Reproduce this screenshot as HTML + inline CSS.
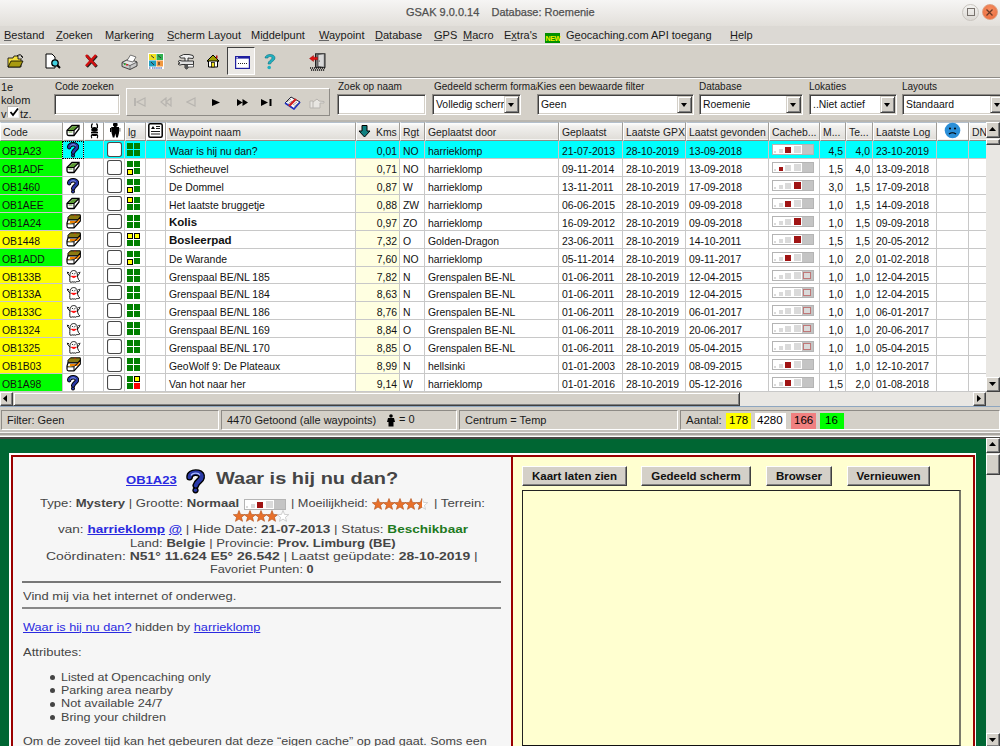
<!DOCTYPE html>
<html><head><meta charset="utf-8">
<style>
*{box-sizing:border-box}
html,body{margin:0;padding:0}
body{width:1000px;height:746px;overflow:hidden;position:relative;background:#d4d0c8;font-family:'Liberation Sans', sans-serif;color:#000}
.a{position:absolute}
.t{position:absolute;white-space:nowrap;line-height:1}
.menu span{position:absolute;top:29.5px;font-size:11px;color:#1a1a1a;white-space:nowrap;line-height:1}
.menu u{text-decoration:underline;text-decoration-color:#666}
.lbl{position:absolute;font-size:10px;color:#1a1a1a;white-space:nowrap;line-height:1;top:82px}
.inp{position:absolute;background:#fff;border-top:1px solid #8e8b86;border-left:1px solid #8e8b86;border-bottom:1px solid #fff;border-right:1px solid #fff;box-shadow:inset 1px 1px 0 #404040,inset -1px -1px 0 #d4d0c8}
.ddb{position:absolute;top:1px;right:1px;width:15px;bottom:1px;background:#d4d0c8;border-top:1px solid #d4d0c8;border-left:1px solid #d4d0c8;border-right:1px solid #404040;border-bottom:1px solid #404040;box-shadow:inset 1px 1px 0 #fff,inset -1px -1px 0 #808080}
.ddb:after{content:"";position:absolute;left:3px;top:6px;border-left:3.5px solid transparent;border-right:3.5px solid transparent;border-top:4px solid #000}
.ct{position:absolute;left:3px;top:5px;font-size:10.4px;color:#111;white-space:nowrap;line-height:1}
.hd{position:absolute;top:122px;height:19px;background:linear-gradient(#fff,#f1f0ee 20%,#dfdcd7);border-top:1px solid #b3bfcc;border-left:1px solid #fff;border-right:1px solid #a09d98;border-bottom:1px solid #8e8b86;box-shadow:inset 0 -1px 0 #f4f3f1;font-size:10.4px;color:#222;white-space:nowrap;overflow:hidden;line-height:1}
.hd span{position:absolute;top:5px}
.hw{background:#fff}
.c{position:absolute;height:18px;border-right:1px solid #c8c8c8;border-bottom:1px solid #c8c8c8;font-size:10.4px;color:#111;white-space:nowrap;overflow:hidden;line-height:1}
.c span{position:absolute;top:5.5px}
.r{text-align:right}
</style></head><body>

<div class="a" style="left:0;top:0;width:1000px;height:25.5px;background:linear-gradient(#f6f5f4,#e2dfda)"></div>
<div class="t" id="TTL" style="left:406px;top:6.5px;font-size:11px;color:#505050;-webkit-text-stroke:0.25px #505050;transform-origin:0 0;transform:scaleX(0.9984)">GSAK 9.0.0.14&nbsp;&nbsp;&nbsp; Database: Roemenie</div>
<div class="a" style="left:962px;top:4px;width:17px;height:17px;border-radius:50%;background:linear-gradient(#f4f3f1,#dcd9d4);border:1px solid #c9c5bf"></div>
<div class="a" style="left:967px;top:8px;width:8px;height:8px;border:1.5px solid #77716c"></div>
<div class="a" style="left:982px;top:4px;width:16px;height:16px;border-radius:50%;background:radial-gradient(circle at 50% 35%,#f58e62,#ea6a3a);border:1px solid #e0a080"></div>
<svg class="a" style="left:985px;top:8px" width="9" height="9" viewBox="0 0 9 9"><path d="M1.5 1.5 L7.5 7.5 M7.5 1.5 L1.5 7.5" stroke="#6b3a26" stroke-width="1.3"/></svg>
<div class="a" style="left:0;top:25.5px;width:1000px;height:18.5px;background:#dcd9d4"></div>
<div class="a" style="left:0;top:44px;width:1000px;height:1px;background:#fff"></div>
<div class="menu">
<span style="left:4px"><u>B</u>estand</span>
<span style="left:56px"><u>Z</u>oeken</span>
<span style="left:105px">M<u>a</u>rkering</span>
<span style="left:167px"><u>S</u>cherm Layout</span>
<span style="left:251px">Mi<u>d</u>delpunt</span>
<span style="left:319px"><u>W</u>aypoint</span>
<span style="left:375px"><u>D</u>atabase</span>
<span style="left:434px"><u>G</u>PS</span>
<span style="left:463px"><u>M</u>acro</span>
<span style="left:504px">E<u>x</u>tra's</span>
<span style="left:566px">G<u>e</u>ocaching.com API toegang</span>
<span style="left:730px"><u>H</u>elp</span>
</div>
<div class="a" style="left:545px;top:33px;width:15px;height:9.5px;background:#009000"></div>
<div class="t" style="left:545.5px;top:34.5px;font-size:7px;color:#f0f000;font-weight:bold;letter-spacing:-0.3px">NEW</div>
<div class="a" style="left:0;top:77px;width:1000px;height:1px;background:#8e8b86"></div>
<div class="a" style="left:0;top:78px;width:1000px;height:1px;background:#fff"></div>
<svg width="0" height="0" style="position:absolute">
<defs>
<symbol id="q" viewBox="0 0 12 16"><path d="M2.2 5.2 C2 1.5 10 1.2 10 5 C10 7.3 6.8 7.8 6.2 10.5" stroke="#000" stroke-width="4.4" fill="none" stroke-linecap="round"/><circle cx="6" cy="13.6" r="2" fill="#000"/><path d="M2.2 5.2 C2 1.5 10 1.2 10 5 C10 7.3 6.8 7.8 6.2 10.5" stroke="#2a3aa8" stroke-width="2.6" fill="none" stroke-linecap="round"/><path d="M3.2 4.2 C4 2.3 8 2.2 8.8 4" stroke="#a8b8ff" stroke-width="0.8" fill="none"/><circle cx="6" cy="13.6" r="1.1" fill="#2a3aa8"/></symbol>
<symbol id="trad" viewBox="0 0 14 13"><path d="M1 6.5 L6 1.5 L13 1.5 L13 5 L8 11.5 L3 11.5 Q1 11.5 1 9.5 Z" fill="#fff" stroke="#000" stroke-width="1.3"/><path d="M2 6.5 L6.5 2.3 L12.3 2.3 L8 6.5 Z" fill="#5a9a30"/><path d="M1 6.5 L8 6.5 L13 1.5 M8 6.5 L8 11.5" stroke="#000" stroke-width="1.1" fill="none"/><path d="M2.5 8 L6.5 8" stroke="#5a9a30" stroke-width="1"/></symbol>
<symbol id="multi" viewBox="0 0 15 15"><path d="M4.5 0.8 L14.3 0.8 L14.3 3.3 L12 5.8 L2 5.8 L2 3.3 Z" fill="#8a7a10" stroke="#000" stroke-width="1"/><path d="M8 1.3 L10 1.3" stroke="#b03010" stroke-width="1"/><path d="M2 5.8 L12 5.8 L14.3 3.3 L14.3 7 L8 13.8 L2.5 13.8 Q1 13.8 1 12 L1 9 Z" fill="#fff" stroke="#000" stroke-width="1.2"/><path d="M4 8 L11 8 L13.5 5.3" stroke="#f08000" stroke-width="1.8" fill="none"/><path d="M1 9.8 L8 9.8 L8 13.8 M8 9.8 L14.3 3.3" stroke="#000" stroke-width="1" fill="none"/><path d="M2.5 9.2 L5.5 9.2" stroke="#e0b000" stroke-width="0.9"/></symbol>
<symbol id="ghost" viewBox="0 0 15 15"><path d="M4 14 C3.5 12 4 9 4 6.5 C4 1.5 11 1.2 11.3 6 C11.5 8.5 11.5 11 13.8 13 C12 14.2 10.5 13 9.5 14.2 C8.5 13.4 7.3 14.6 6.2 13.8 C5.3 14.5 4.6 14.3 4 14 Z" fill="#fff" stroke="#000" stroke-width="0.9"/><path d="M4.2 8.5 L1.8 5.5 L1.3 3.8 M1.8 5.5 L2.8 4 M11.2 8.5 L13.5 5.5 L14 3.8 M13.5 5.5 L12.5 4" stroke="#000" stroke-width="0.9" fill="none"/><path d="M5.8 5 L7.2 6 M9.6 5 L8.2 6" stroke="#000" stroke-width="0.8"/><path d="M5.3 8.3 Q7.7 11 10.3 8.3 Z" fill="#f00" stroke="#f00" stroke-width="0.8"/></symbol>
<symbol id="chk" viewBox="0 0 14 14"><rect x="0.5" y="0.5" width="13" height="13" rx="2" fill="#fff" stroke="#4a4a4a" stroke-width="1"/></symbol>
</defs></svg>
<svg class="a" style="left:7px;top:53px" width="17" height="16" viewBox="0 0 17 16"><path d="M1 5 L6 5 L7 3 L11 3 L11 6 L14 6 L14 14 L1 14 Z" fill="#f4e040" stroke="#000" stroke-width="0.8"/><path d="M1 14 L4 8 L16 8 L13 14 Z" fill="#a89a10" stroke="#000" stroke-width="0.8"/><path d="M10 3 Q14 0 15 4" stroke="#000" fill="none" stroke-width="1"/><path d="M14 3 L16 4 L14.5 5.5" stroke="#000" fill="none" stroke-width="0.8"/></svg>
<svg class="a" style="left:45px;top:53px" width="16" height="17" viewBox="0 0 16 17"><path d="M1 1 L7 1 L10 4 L10 15 L1 15 Z" fill="#fff" stroke="#000" stroke-width="1"/><circle cx="10" cy="10" r="3.2" fill="#40d0e0" stroke="#000" stroke-width="1.3"/><path d="M12.3 12.3 L15 15" stroke="#000" stroke-width="2"/></svg>
<svg class="a" style="left:84px;top:53px" width="14" height="15" viewBox="0 0 14 15"><path d="M2 2 L12 13 M12 2 L2 13" stroke="#222" stroke-width="3" transform="translate(0.7,0.7)"/><path d="M2 2 L12 13 M12 2 L2 13" stroke="#d01010" stroke-width="2.6"/></svg>
<svg class="a" style="left:121px;top:54px" width="17" height="16" viewBox="0 0 17 16"><path d="M1 8.5 L8 5 L16 8 L16 12 L9 15.5 L1 12.5 Z" fill="#c8c8c8" stroke="#333" stroke-width="0.9"/><path d="M1 8.5 L8 5 L16 8 L9 11.5 Z" fill="#e8e8e8" stroke="#333" stroke-width="0.7"/><path d="M9 11.5 L9 15.5" stroke="#555" stroke-width="0.7"/><path d="M6 6.5 L9.5 1 L15 3 L12 8 Z" fill="#fff" stroke="#555" stroke-width="0.8"/><rect x="3" y="9.6" width="1.6" height="1.2" fill="#0b0"/><rect x="5.2" y="10.3" width="1.6" height="1.2" fill="#e00"/></svg>
<svg class="a" style="left:148px;top:53px" width="16" height="16" viewBox="0 0 16 16"><rect x="0" y="0" width="16" height="16" fill="#fff"/><rect x="1" y="1" width="7" height="6" fill="#f0e020"/><rect x="8.5" y="1" width="6.5" height="6" fill="#30b050"/><rect x="1" y="7.5" width="7" height="6" fill="#20a0c0"/><rect x="8.5" y="7.5" width="6.5" height="6" fill="#f09840"/><path d="M1 15 L3 15 M4 15 L14 15" stroke="#2040a0" stroke-width="1.2" stroke-dasharray="1.5 0.6"/><path d="M3 2.5 L6 5 M10 2.5 L13 5 M3 9 L6 12" stroke="#333" stroke-width="1"/><path d="M11 9 L11 12" stroke="#333" stroke-width="1.2"/></svg>
<svg class="a" style="left:177px;top:53px" width="18" height="18" viewBox="0 0 18 18"><path d="M2.5 3.5 Q6 0.5 12 1.5 L16 2.5 Q17 4 16 5.5 L11 5 L11 15 Q9.5 17 8 15 L8 5 L4 5 Q2.5 4.5 2.5 3.5 Z" fill="#f0f0f0" stroke="#222" stroke-width="0.9"/><path d="M1 8.5 Q2.5 6.5 5 8 L16.5 8 L16.5 11.5 L5 11.5 Q2.5 13 1 11 L3 10 Z" fill="#e0e0e0" stroke="#222" stroke-width="0.9"/><rect x="8" y="11.5" width="3" height="4.5" fill="#555"/><path d="M11 11.5 L16.5 11.5 L16.5 14 L11 14" fill="#fff" stroke="#222" stroke-width="0.7"/></svg>
<svg class="a" style="left:206px;top:54px" width="14" height="14" viewBox="0 0 14 14"><path d="M7 1 L13 7 L11.5 7 L11.5 13 L2.5 13 L2.5 7 L1 7 Z" fill="#fff" stroke="#000" stroke-width="1"/><path d="M7 1 L13 7 L1 7 Z" fill="#a0a000" stroke="#000" stroke-width="1"/><rect x="5.5" y="8.5" width="3" height="4.5" fill="#f0e020" stroke="#000" stroke-width="0.7"/><rect x="10" y="1.5" width="1.5" height="3" fill="#b01010"/></svg>
<div class="a" style="left:227px;top:47px;width:28px;height:28px;border-top:1px solid #404040;border-left:1px solid #404040;border-bottom:1px solid #fff;border-right:1px solid #fff;background:#ebe9e5"></div>
<svg class="a" style="left:235px;top:56px" width="15" height="13" viewBox="0 0 15 13"><rect x="0.6" y="0.6" width="13.8" height="11.8" fill="#fff" stroke="#2020a0" stroke-width="1.2"/><rect x="0.6" y="0.6" width="13.8" height="2" fill="#2020a0"/><rect x="1.5" y="1" width="1.2" height="1.2" fill="#fff"/><path d="M3 7.5 L12 7.5" stroke="#222" stroke-width="1" stroke-dasharray="1 1"/></svg>
<svg class="a" style="left:263px;top:53px" width="13" height="17" viewBox="0 0 13 17"><path d="M2 5 C2 0.5 12 0 12 5 C12 8 8 8.5 7.5 11 L5 11 C5 7.5 9 7 9 5 C9 3 5 3 5 5 Z" fill="#20b0c0" stroke="#107080" stroke-width="0.6"/><circle cx="6.2" cy="14.5" r="1.8" fill="#20b0c0"/></svg>
<svg class="a" style="left:309px;top:53px" width="17" height="18" viewBox="0 0 17 18"><rect x="6.5" y="0.8" width="9.5" height="13.5" fill="#777" stroke="#222" stroke-width="1"/><path d="M9 1.5 L15.3 0.8 L15.3 14.3 L9 13.5 Z" fill="#d8d8d8" stroke="#333" stroke-width="0.7"/><circle cx="10.3" cy="8" r="0.6" fill="#222"/><path d="M0.5 5.5 L4.5 2.5 L4.5 4.2 L8.5 4.2 L8.5 6.8 L4.5 6.8 L4.5 8.5 Z" fill="#e01010" stroke="#800" stroke-width="0.4"/><path d="M1 15 L16 15 M2 17 L16 17" stroke="#111" stroke-width="1.4" stroke-dasharray="1.2 0.8"/></svg>
<div class="a" style="left:0;top:120px;width:1000px;height:2px;background:#b9b6b0"></div>
<div class="t" style="left:1px;top:80.5px;font-size:11px;color:#1a1a1a;line-height:13.5px;white-space:normal;width:40px">1e<br>kolom<br>v</div>
<div class="t" style="left:20px;top:107.5px;font-size:11px;color:#1a1a1a;line-height:13.5px">tz.</div>
<div class="a" style="left:7px;top:106px;width:12px;height:12px;background:#fff;border-top:1px solid #b8b5b0;border-left:1px solid #b8b5b0;border-right:1px solid #eee;border-bottom:1px solid #eee"></div>
<svg class="a" style="left:9px;top:107px" width="10" height="10" viewBox="0 0 10 10"><path d="M1.5 5 L4 8 L9 1.5" stroke="#000" stroke-width="1.8" fill="none"/></svg>
<div class="lbl" style="left:55px">Code zoeken</div>
<div class="inp" style="left:54px;top:94px;width:66px;height:21px"></div>
<div class="a" style="left:126px;top:88px;width:204px;height:28px;border-top:1px solid #fff;border-left:1px solid #fff;border-right:1px solid #8e8b86;border-bottom:1px solid #8e8b86"></div>
<svg class="a" style="left:134px;top:97px" width="12" height="10" viewBox="0 0 12 10"><path d="M1 1 L1 9" stroke="#b8b5b0" stroke-width="2"/><path d="M11 1 L3 5 L11 9 Z" fill="none" stroke="#b8b5b0" stroke-width="1.2"/></svg>
<svg class="a" style="left:160px;top:97px" width="12" height="10" viewBox="0 0 12 10"><path d="M6 1 L1 5 L6 9 Z M11 1 L6 5 L11 9 Z" fill="none" stroke="#b8b5b0" stroke-width="1.2"/></svg>
<svg class="a" style="left:186px;top:97px" width="10" height="10" viewBox="0 0 10 10"><path d="M9 1 L1 5 L9 9 Z" fill="none" stroke="#b8b5b0" stroke-width="1.2"/></svg>
<svg class="a" style="left:212px;top:99px" width="8" height="7" viewBox="0 0 8 7"><path d="M0 0 L8 3.5 L0 7 Z" fill="#000"/></svg>
<svg class="a" style="left:237px;top:99px" width="11" height="7" viewBox="0 0 11 7"><path d="M0 0 L5.5 3.5 L0 7 Z M5.5 0 L11 3.5 L5.5 7 Z" fill="#000"/></svg>
<svg class="a" style="left:261px;top:99px" width="11" height="7" viewBox="0 0 11 7"><path d="M0 0 L7 3.5 L0 7 Z" fill="#000"/><rect x="8.5" y="0" width="2" height="7" fill="#000"/></svg>
<svg class="a" style="left:284px;top:96px" width="17" height="14" viewBox="0 0 17 14"><path d="M1 7 L7 1 L16 6 L10 13 Z" fill="#fff" stroke="#223" stroke-width="1"/><path d="M1 7 L10 13 L16 6" stroke="#2030c0" stroke-width="1.6" fill="none"/><path d="M5 10 L12 3" stroke="#d02020" stroke-width="2.4"/><path d="M3 6 L7 3 M4.5 7.5 L8 5 M9 9 L13 6 M10 10.5 L14 7.5" stroke="#555" stroke-width="0.6"/></svg>
<svg class="a" style="left:309px;top:98px" width="16" height="11" viewBox="0 0 16 11"><path d="M1 3 L4 3 L4 10 L1 10 Z M4 4 L8 1 L10 3 L15 3.5 L15 5 L11 5 L11 10 L4 10" fill="#e8e6e2" stroke="#b8b5b0" stroke-width="1"/></svg>
<div class="lbl" style="left:338px">Zoek op naam</div>
<div class="inp" style="left:337px;top:94px;width:89px;height:21px"></div>
<div class="lbl" style="left:434px;width:103px;overflow:hidden">Gedeeld scherm formaat</div>
<div class="lbl" style="left:537px">Kies een bewaarde filter</div>
<div class="lbl" style="left:699px">Database</div>
<div class="lbl" style="left:809px">Lokaties</div>
<div class="lbl" style="left:902px">Layouts</div>
<div class="inp" style="left:432px;top:94px;width:89px;height:21px"><div class="ct">Volledig scherm</div><div class="ddb"></div></div>
<div class="inp" style="left:537px;top:94px;width:157px;height:21px"><div class="ct">Geen</div><div class="ddb"></div></div>
<div class="inp" style="left:699px;top:94px;width:104px;height:21px"><div class="ct">Roemenie</div><div class="ddb"></div></div>
<div class="inp" style="left:809px;top:94px;width:88px;height:21px"><div class="ct">..Niet actief</div><div class="ddb"></div></div>
<div class="inp" style="left:902px;top:94px;width:105px;height:21px"><div class="ct">Standaard</div><div class="ddb"></div></div>
<div class="a" style="left:0;top:122px;width:986px;height:271px;background:#fff"></div>
<div class="hd" style="left:0px;width:63px"><span style="left:2px">Code</span></div>
<div class="hd hw" style="left:63px;width:21px"></div>
<div class="hd hw" style="left:84px;width:20px"></div>
<div class="hd hw" style="left:104px;width:21px"></div>
<div class="hd" style="left:125px;width:21px"><span style="left:2px">lg</span></div>
<div class="hd hw" style="left:146px;width:20px"></div>
<div class="hd" style="left:166px;width:190px"><span style="left:2px">Waypoint naam</span></div>
<div class="hd" style="left:356px;width:44px"><span style="left:19px">Kms</span></div>
<div class="hd" style="left:400px;width:25px"><span style="left:2px">Rgt</span></div>
<div class="hd" style="left:425px;width:134px"><span style="left:2px">Geplaatst door</span></div>
<div class="hd" style="left:559px;width:64px"><span style="left:2px">Geplaatst</span></div>
<div class="hd" style="left:623px;width:63px"><span style="left:2px">Laatste GPX</span></div>
<div class="hd" style="left:686px;width:83px"><span style="left:2px">Laatst gevonden</span></div>
<div class="hd" style="left:769px;width:51px"><span style="left:2px">Cacheb...</span></div>
<div class="hd" style="left:820px;width:26px"><span style="left:2px">M...</span></div>
<div class="hd" style="left:846px;width:27px"><span style="left:2px">Te...</span></div>
<div class="hd" style="left:873px;width:64px"><span style="left:2px">Laatste Log</span></div>
<div class="hd hw" style="left:937px;width:32px"></div>
<div class="hd" style="left:969px;width:18px"><span style="left:2px">DN</span></div>
<svg class="a" style="left:66px;top:124px" width="14" height="13" viewBox="0 0 14 13"><use href="#trad"/></svg>
<svg class="a" style="left:83px;top:121px" width="21" height="20" viewBox="0 0 21 20"><path d="M9.5 2.5 Q8 4 8.6 7 M13.5 2.5 Q15 4 14.4 7" stroke="#000" stroke-width="1.3" fill="none"/><ellipse cx="11.5" cy="8.3" rx="3" ry="2.4" fill="#000"/><rect x="8.5" y="8.3" width="6" height="2.2" fill="#000"/><rect x="8" y="11" width="7" height="1.4" fill="#000"/><path d="M8.7 13 L14.3 13 L13.6 15 L9.4 15 Z" fill="#000"/><path d="M8.8 13.5 Q7.6 15.3 8.8 17.2 M14.2 13.5 Q15.4 15.3 14.2 17.2" stroke="#000" stroke-width="1.2" fill="none"/></svg>
<svg class="a" style="left:104px;top:121px" width="20" height="20" viewBox="0 0 20 20"><rect x="9" y="2" width="4.6" height="3.2" rx="1" fill="#000"/><rect x="10" y="4.5" width="2.6" height="1.8" fill="#000"/><path d="M7.2 6 L15 6 L15 12 L13.8 16.5 L12.2 16.5 L11.3 12.5 L10.4 16.5 L8.8 16.5 L7.6 12 Z" fill="#000"/><rect x="6" y="7" width="1.4" height="4" fill="#000"/><rect x="15" y="7" width="1.6" height="3.6" fill="#999"/></svg>
<svg class="a" style="left:148px;top:123px" width="15" height="15" viewBox="0 0 15 15"><rect x="0.8" y="0.8" width="13.4" height="13.4" rx="1.5" fill="#fff" stroke="#000" stroke-width="1.5"/><path d="M3 6 L5 3 L7 6 Z" fill="#000"/><path d="M8 3.5 L12 3.5 M8 5.5 L12 5.5 M3 8.5 L12 8.5 M3 11 L12 11" stroke="#000" stroke-width="0.9"/></svg>
<svg class="a" style="left:944px;top:122px" width="17" height="17" viewBox="0 0 17 17"><circle cx="8.5" cy="8.5" r="7.8" fill="#2b8fd8"/><circle cx="6" cy="6.5" r="1" fill="#000"/><circle cx="11" cy="6.5" r="1" fill="#000"/><path d="M5 12 Q8.5 9.5 12 12" stroke="#000" stroke-width="1.2" fill="none"/></svg>
<svg class="a" style="left:358px;top:125px" width="13" height="13" viewBox="0 0 13 13"><path d="M4 0.5 L9 0.5 L9 6 L12 6 L6.5 12 L1 6 L4 6 Z" fill="#108080" stroke="#000" stroke-width="1"/></svg>
<div class="c" style="left:0px;top:141px;width:63px;height:18px;background:#00ff00"><span style="left:2px;">OB1A23</span></div>
<div class="c" style="left:63px;top:141px;width:21px;height:18px;background:#00ffff"></div>
<div class="c" style="left:84px;top:141px;width:20px;height:18px;background:#00ffff"></div>
<div class="c" style="left:104px;top:141px;width:21px;height:18px;background:#00ffff"></div>
<div class="c" style="left:125px;top:141px;width:21px;height:18px;background:#00ffff"></div>
<div class="c" style="left:146px;top:141px;width:20px;height:18px;background:#00ffff"></div>
<div class="c" style="left:166px;top:141px;width:190px;height:18px;background:#00ffff"><span style="left:3px;">Waar is hij nu dan?</span></div>
<div class="c" style="left:356px;top:141px;width:44px;height:18px;background:#00ffff"><span style="right:2px;">0,01</span></div>
<div class="c" style="left:400px;top:141px;width:25px;height:18px;background:#00ffff"><span style="left:3px;">NO</span></div>
<div class="c" style="left:425px;top:141px;width:134px;height:18px;background:#00ffff"><span style="left:3px;">harrieklomp</span></div>
<div class="c" style="left:559px;top:141px;width:64px;height:18px;background:#00ffff"><span style="left:3px;">21-07-2013</span></div>
<div class="c" style="left:623px;top:141px;width:63px;height:18px;background:#00ffff"><span style="left:3px;">28-10-2019</span></div>
<div class="c" style="left:686px;top:141px;width:83px;height:18px;background:#00ffff"><span style="left:3px;">13-09-2018</span></div>
<div class="c" style="left:769px;top:141px;width:51px;height:18px;background:#00ffff"></div>
<div class="c" style="left:820px;top:141px;width:26px;height:18px;background:#00ffff"><span style="right:2px;">4,5</span></div>
<div class="c" style="left:846px;top:141px;width:27px;height:18px;background:#00ffff"><span style="right:2px;">4,0</span></div>
<div class="c" style="left:873px;top:141px;width:64px;height:18px;background:#00ffff"><span style="left:3px;">23-10-2019</span></div>
<div class="c" style="left:937px;top:141px;width:32px;height:18px;background:#00ffff"></div>
<div class="c" style="left:969px;top:141px;width:18px;height:18px;background:#00ffff"></div>
<svg class="a" style="left:67px;top:142px" width="12" height="16" viewBox="0 0 12 16"><use href="#q"/></svg>
<svg class="a" style="left:107px;top:142px" width="15" height="15" viewBox="0 0 14 14"><use href="#chk"/></svg>
<svg class="a" style="left:127px;top:143px" width="14" height="14" viewBox="0 0 14 14"><rect x="0" y="0" width="6" height="6" fill="#008000"/><rect x="7" y="0" width="6" height="6" fill="#008000"/><rect x="0" y="7" width="6" height="6" fill="#008000"/><rect x="7" y="7" width="6" height="6" fill="#008000"/></svg>
<svg class="a" style="left:772px;top:144px" width="42" height="11" viewBox="0 0 42 11"><rect x="0.5" y="0.5" width="41" height="10" fill="#fff" stroke="#b4b4b4" stroke-width="1"/><rect x="30" y="1" width="11" height="9" fill="#c4c4c4"/><rect x="2" y="7" width="2" height="2" fill="#dadada"/><rect x="7" y="5" width="4" height="4" fill="#dadada"/><rect x="13" y="3" width="6" height="6" fill="#a01414"/><rect x="22" y="2" width="7" height="7" fill="#dadada"/></svg>
<div class="c" style="left:0px;top:159px;width:63px;height:18px;background:#00ff00"><span style="left:2px;">OB1ADF</span></div>
<div class="c" style="left:63px;top:159px;width:21px;height:18px;background:#fff"></div>
<div class="c" style="left:84px;top:159px;width:20px;height:18px;background:#fff"></div>
<div class="c" style="left:104px;top:159px;width:21px;height:18px;background:#fff"></div>
<div class="c" style="left:125px;top:159px;width:21px;height:18px;background:#fff"></div>
<div class="c" style="left:146px;top:159px;width:20px;height:18px;background:#fff"></div>
<div class="c" style="left:166px;top:159px;width:190px;height:18px;background:#fff"><span style="left:3px;">Schietheuvel</span></div>
<div class="c" style="left:356px;top:159px;width:44px;height:18px;background:#ffffe1"><span style="right:2px;">0,71</span></div>
<div class="c" style="left:400px;top:159px;width:25px;height:18px;background:#fff"><span style="left:3px;">NO</span></div>
<div class="c" style="left:425px;top:159px;width:134px;height:18px;background:#fff"><span style="left:3px;">harrieklomp</span></div>
<div class="c" style="left:559px;top:159px;width:64px;height:18px;background:#fff"><span style="left:3px;">09-11-2014</span></div>
<div class="c" style="left:623px;top:159px;width:63px;height:18px;background:#fff"><span style="left:3px;">28-10-2019</span></div>
<div class="c" style="left:686px;top:159px;width:83px;height:18px;background:#fff"><span style="left:3px;">13-09-2018</span></div>
<div class="c" style="left:769px;top:159px;width:51px;height:18px;background:#fff"></div>
<div class="c" style="left:820px;top:159px;width:26px;height:18px;background:#fff"><span style="right:2px;">1,5</span></div>
<div class="c" style="left:846px;top:159px;width:27px;height:18px;background:#fff"><span style="right:2px;">4,0</span></div>
<div class="c" style="left:873px;top:159px;width:64px;height:18px;background:#fff"><span style="left:3px;">13-09-2018</span></div>
<div class="c" style="left:937px;top:159px;width:32px;height:18px;background:#fff"></div>
<div class="c" style="left:969px;top:159px;width:18px;height:18px;background:#fff"></div>
<svg class="a" style="left:66px;top:161px" width="14" height="13" viewBox="0 0 14 13"><use href="#trad"/></svg>
<svg class="a" style="left:107px;top:160px" width="15" height="15" viewBox="0 0 14 14"><use href="#chk"/></svg>
<svg class="a" style="left:127px;top:161px" width="14" height="14" viewBox="0 0 14 14"><rect x="0" y="0" width="6" height="6" fill="#008000"/><rect x="7" y="0" width="6" height="6" fill="#008000"/><rect x="0.5" y="8.5" width="5" height="5" fill="#ffff00" stroke="#000" stroke-width="1"/><rect x="7" y="7" width="6" height="6" fill="#008000"/></svg>
<svg class="a" style="left:772px;top:162px" width="42" height="11" viewBox="0 0 42 11"><rect x="0.5" y="0.5" width="41" height="10" fill="#fff" stroke="#b4b4b4" stroke-width="1"/><rect x="30" y="1" width="11" height="9" fill="#c4c4c4"/><rect x="2" y="7" width="2" height="2" fill="#dadada"/><rect x="7" y="5" width="4" height="4" fill="#a01414"/><rect x="13" y="3" width="6" height="6" fill="#dadada"/><rect x="22" y="2" width="7" height="7" fill="#dadada"/></svg>
<div class="c" style="left:0px;top:177px;width:63px;height:18px;background:#00ff00"><span style="left:2px;">OB1460</span></div>
<div class="c" style="left:63px;top:177px;width:21px;height:18px;background:#fff"></div>
<div class="c" style="left:84px;top:177px;width:20px;height:18px;background:#fff"></div>
<div class="c" style="left:104px;top:177px;width:21px;height:18px;background:#fff"></div>
<div class="c" style="left:125px;top:177px;width:21px;height:18px;background:#fff"></div>
<div class="c" style="left:146px;top:177px;width:20px;height:18px;background:#fff"></div>
<div class="c" style="left:166px;top:177px;width:190px;height:18px;background:#fff"><span style="left:3px;">De Dommel</span></div>
<div class="c" style="left:356px;top:177px;width:44px;height:18px;background:#ffffe1"><span style="right:2px;">0,87</span></div>
<div class="c" style="left:400px;top:177px;width:25px;height:18px;background:#fff"><span style="left:3px;">W</span></div>
<div class="c" style="left:425px;top:177px;width:134px;height:18px;background:#fff"><span style="left:3px;">harrieklomp</span></div>
<div class="c" style="left:559px;top:177px;width:64px;height:18px;background:#fff"><span style="left:3px;">13-11-2011</span></div>
<div class="c" style="left:623px;top:177px;width:63px;height:18px;background:#fff"><span style="left:3px;">28-10-2019</span></div>
<div class="c" style="left:686px;top:177px;width:83px;height:18px;background:#fff"><span style="left:3px;">17-09-2018</span></div>
<div class="c" style="left:769px;top:177px;width:51px;height:18px;background:#fff"></div>
<div class="c" style="left:820px;top:177px;width:26px;height:18px;background:#fff"><span style="right:2px;">3,0</span></div>
<div class="c" style="left:846px;top:177px;width:27px;height:18px;background:#fff"><span style="right:2px;">1,5</span></div>
<div class="c" style="left:873px;top:177px;width:64px;height:18px;background:#fff"><span style="left:3px;">17-09-2018</span></div>
<div class="c" style="left:937px;top:177px;width:32px;height:18px;background:#fff"></div>
<div class="c" style="left:969px;top:177px;width:18px;height:18px;background:#fff"></div>
<svg class="a" style="left:67px;top:178px" width="12" height="16" viewBox="0 0 12 16"><use href="#q"/></svg>
<svg class="a" style="left:107px;top:178px" width="15" height="15" viewBox="0 0 14 14"><use href="#chk"/></svg>
<svg class="a" style="left:127px;top:179px" width="14" height="14" viewBox="0 0 14 14"><rect x="0" y="0" width="6" height="6" fill="#008000"/><rect x="7" y="0" width="6" height="6" fill="#008000"/><rect x="0.5" y="8.5" width="5" height="5" fill="#ffff00" stroke="#000" stroke-width="1"/><rect x="7" y="7" width="6" height="6" fill="#008000"/></svg>
<svg class="a" style="left:772px;top:180px" width="42" height="11" viewBox="0 0 42 11"><rect x="0.5" y="0.5" width="41" height="10" fill="#fff" stroke="#b4b4b4" stroke-width="1"/><rect x="30" y="1" width="11" height="9" fill="#c4c4c4"/><rect x="2" y="7" width="2" height="2" fill="#dadada"/><rect x="7" y="5" width="4" height="4" fill="#dadada"/><rect x="13" y="3" width="6" height="6" fill="#dadada"/><rect x="22" y="2" width="7" height="7" fill="#a01414"/></svg>
<div class="c" style="left:0px;top:195px;width:63px;height:18px;background:#00ff00"><span style="left:2px;">OB1AEE</span></div>
<div class="c" style="left:63px;top:195px;width:21px;height:18px;background:#fff"></div>
<div class="c" style="left:84px;top:195px;width:20px;height:18px;background:#fff"></div>
<div class="c" style="left:104px;top:195px;width:21px;height:18px;background:#fff"></div>
<div class="c" style="left:125px;top:195px;width:21px;height:18px;background:#fff"></div>
<div class="c" style="left:146px;top:195px;width:20px;height:18px;background:#fff"></div>
<div class="c" style="left:166px;top:195px;width:190px;height:18px;background:#fff"><span style="left:3px;">Het laatste bruggetje</span></div>
<div class="c" style="left:356px;top:195px;width:44px;height:18px;background:#ffffe1"><span style="right:2px;">0,88</span></div>
<div class="c" style="left:400px;top:195px;width:25px;height:18px;background:#fff"><span style="left:3px;">ZW</span></div>
<div class="c" style="left:425px;top:195px;width:134px;height:18px;background:#fff"><span style="left:3px;">harrieklomp</span></div>
<div class="c" style="left:559px;top:195px;width:64px;height:18px;background:#fff"><span style="left:3px;">06-06-2015</span></div>
<div class="c" style="left:623px;top:195px;width:63px;height:18px;background:#fff"><span style="left:3px;">28-10-2019</span></div>
<div class="c" style="left:686px;top:195px;width:83px;height:18px;background:#fff"><span style="left:3px;">09-09-2018</span></div>
<div class="c" style="left:769px;top:195px;width:51px;height:18px;background:#fff"></div>
<div class="c" style="left:820px;top:195px;width:26px;height:18px;background:#fff"><span style="right:2px;">1,0</span></div>
<div class="c" style="left:846px;top:195px;width:27px;height:18px;background:#fff"><span style="right:2px;">1,5</span></div>
<div class="c" style="left:873px;top:195px;width:64px;height:18px;background:#fff"><span style="left:3px;">14-09-2018</span></div>
<div class="c" style="left:937px;top:195px;width:32px;height:18px;background:#fff"></div>
<div class="c" style="left:969px;top:195px;width:18px;height:18px;background:#fff"></div>
<svg class="a" style="left:66px;top:197px" width="14" height="13" viewBox="0 0 14 13"><use href="#trad"/></svg>
<svg class="a" style="left:107px;top:196px" width="15" height="15" viewBox="0 0 14 14"><use href="#chk"/></svg>
<svg class="a" style="left:127px;top:197px" width="14" height="14" viewBox="0 0 14 14"><rect x="0.5" y="0.5" width="5" height="5" fill="#ffff00" stroke="#000" stroke-width="1"/><rect x="7" y="0" width="6" height="6" fill="#008000"/><rect x="0" y="7" width="6" height="6" fill="#008000"/><rect x="7" y="7" width="6" height="6" fill="#008000"/></svg>
<svg class="a" style="left:772px;top:198px" width="42" height="11" viewBox="0 0 42 11"><rect x="0.5" y="0.5" width="41" height="10" fill="#fff" stroke="#b4b4b4" stroke-width="1"/><rect x="30" y="1" width="11" height="9" fill="#c4c4c4"/><rect x="2" y="7" width="2" height="2" fill="#dadada"/><rect x="7" y="5" width="4" height="4" fill="#dadada"/><rect x="13" y="3" width="6" height="6" fill="#a01414"/><rect x="22" y="2" width="7" height="7" fill="#dadada"/></svg>
<div class="c" style="left:0px;top:213px;width:63px;height:18px;background:#00ff00"><span style="left:2px;">OB1A24</span></div>
<div class="c" style="left:63px;top:213px;width:21px;height:18px;background:#fff"></div>
<div class="c" style="left:84px;top:213px;width:20px;height:18px;background:#fff"></div>
<div class="c" style="left:104px;top:213px;width:21px;height:18px;background:#fff"></div>
<div class="c" style="left:125px;top:213px;width:21px;height:18px;background:#fff"></div>
<div class="c" style="left:146px;top:213px;width:20px;height:18px;background:#fff"></div>
<div class="c" style="left:166px;top:213px;width:190px;height:18px;background:#fff"><span style="left:3px;font-weight:bold;font-size:11.5px;top:4px;">Kolis</span></div>
<div class="c" style="left:356px;top:213px;width:44px;height:18px;background:#ffffe1"><span style="right:2px;">0,97</span></div>
<div class="c" style="left:400px;top:213px;width:25px;height:18px;background:#fff"><span style="left:3px;">ZO</span></div>
<div class="c" style="left:425px;top:213px;width:134px;height:18px;background:#fff"><span style="left:3px;">harrieklomp</span></div>
<div class="c" style="left:559px;top:213px;width:64px;height:18px;background:#fff"><span style="left:3px;">16-09-2012</span></div>
<div class="c" style="left:623px;top:213px;width:63px;height:18px;background:#fff"><span style="left:3px;">28-10-2019</span></div>
<div class="c" style="left:686px;top:213px;width:83px;height:18px;background:#fff"><span style="left:3px;">09-09-2018</span></div>
<div class="c" style="left:769px;top:213px;width:51px;height:18px;background:#fff"></div>
<div class="c" style="left:820px;top:213px;width:26px;height:18px;background:#fff"><span style="right:2px;">1,0</span></div>
<div class="c" style="left:846px;top:213px;width:27px;height:18px;background:#fff"><span style="right:2px;">1,5</span></div>
<div class="c" style="left:873px;top:213px;width:64px;height:18px;background:#fff"><span style="left:3px;">09-09-2018</span></div>
<div class="c" style="left:937px;top:213px;width:32px;height:18px;background:#fff"></div>
<div class="c" style="left:969px;top:213px;width:18px;height:18px;background:#fff"></div>
<svg class="a" style="left:66px;top:214px" width="15" height="15" viewBox="0 0 15 15"><use href="#multi"/></svg>
<svg class="a" style="left:107px;top:214px" width="15" height="15" viewBox="0 0 14 14"><use href="#chk"/></svg>
<svg class="a" style="left:127px;top:215px" width="14" height="14" viewBox="0 0 14 14"><rect x="0" y="0" width="6" height="6" fill="#008000"/><rect x="7" y="0" width="6" height="6" fill="#008000"/><rect x="0" y="7" width="6" height="6" fill="#008000"/><rect x="7" y="7" width="6" height="6" fill="#008000"/></svg>
<svg class="a" style="left:772px;top:216px" width="42" height="11" viewBox="0 0 42 11"><rect x="0.5" y="0.5" width="41" height="10" fill="#fff" stroke="#b4b4b4" stroke-width="1"/><rect x="30" y="1" width="11" height="9" fill="#c4c4c4"/><rect x="2" y="7" width="2" height="2" fill="#dadada"/><rect x="7" y="5" width="4" height="4" fill="#dadada"/><rect x="13" y="3" width="6" height="6" fill="#dadada"/><rect x="22" y="2" width="7" height="7" fill="#a01414"/></svg>
<div class="c" style="left:0px;top:231px;width:63px;height:18px;background:#ffff00"><span style="left:2px;">OB1448</span></div>
<div class="c" style="left:63px;top:231px;width:21px;height:18px;background:#fff"></div>
<div class="c" style="left:84px;top:231px;width:20px;height:18px;background:#fff"></div>
<div class="c" style="left:104px;top:231px;width:21px;height:18px;background:#fff"></div>
<div class="c" style="left:125px;top:231px;width:21px;height:18px;background:#fff"></div>
<div class="c" style="left:146px;top:231px;width:20px;height:18px;background:#fff"></div>
<div class="c" style="left:166px;top:231px;width:190px;height:18px;background:#fff"><span style="left:3px;font-weight:bold;font-size:11.5px;top:4px;">Bosleerpad</span></div>
<div class="c" style="left:356px;top:231px;width:44px;height:18px;background:#ffffe1"><span style="right:2px;">7,32</span></div>
<div class="c" style="left:400px;top:231px;width:25px;height:18px;background:#fff"><span style="left:3px;">O</span></div>
<div class="c" style="left:425px;top:231px;width:134px;height:18px;background:#fff"><span style="left:3px;">Golden-Dragon</span></div>
<div class="c" style="left:559px;top:231px;width:64px;height:18px;background:#fff"><span style="left:3px;">23-06-2011</span></div>
<div class="c" style="left:623px;top:231px;width:63px;height:18px;background:#fff"><span style="left:3px;">28-10-2019</span></div>
<div class="c" style="left:686px;top:231px;width:83px;height:18px;background:#fff"><span style="left:3px;">14-10-2011</span></div>
<div class="c" style="left:769px;top:231px;width:51px;height:18px;background:#fff"></div>
<div class="c" style="left:820px;top:231px;width:26px;height:18px;background:#fff"><span style="right:2px;">1,5</span></div>
<div class="c" style="left:846px;top:231px;width:27px;height:18px;background:#fff"><span style="right:2px;">1,5</span></div>
<div class="c" style="left:873px;top:231px;width:64px;height:18px;background:#fff"><span style="left:3px;">20-05-2012</span></div>
<div class="c" style="left:937px;top:231px;width:32px;height:18px;background:#fff"></div>
<div class="c" style="left:969px;top:231px;width:18px;height:18px;background:#fff"></div>
<svg class="a" style="left:66px;top:232px" width="15" height="15" viewBox="0 0 15 15"><use href="#multi"/></svg>
<svg class="a" style="left:107px;top:232px" width="15" height="15" viewBox="0 0 14 14"><use href="#chk"/></svg>
<svg class="a" style="left:127px;top:233px" width="14" height="14" viewBox="0 0 14 14"><rect x="0.5" y="0.5" width="5" height="5" fill="#ffff00" stroke="#000" stroke-width="1"/><rect x="7.5" y="0.5" width="5" height="5" fill="#ffff00" stroke="#000" stroke-width="1"/><rect x="0" y="7" width="6" height="6" fill="#008000"/><rect x="7" y="7" width="6" height="6" fill="#008000"/></svg>
<svg class="a" style="left:772px;top:234px" width="42" height="11" viewBox="0 0 42 11"><rect x="0.5" y="0.5" width="41" height="10" fill="#fff" stroke="#b4b4b4" stroke-width="1"/><rect x="30" y="1" width="11" height="9" fill="#c4c4c4"/><rect x="2" y="7" width="2" height="2" fill="#dadada"/><rect x="7" y="5" width="4" height="4" fill="#dadada"/><rect x="13" y="3" width="6" height="6" fill="#dadada"/><rect x="22" y="2" width="7" height="7" fill="#a01414"/></svg>
<div class="c" style="left:0px;top:249px;width:63px;height:18px;background:#00ff00"><span style="left:2px;">OB1ADD</span></div>
<div class="c" style="left:63px;top:249px;width:21px;height:18px;background:#fff"></div>
<div class="c" style="left:84px;top:249px;width:20px;height:18px;background:#fff"></div>
<div class="c" style="left:104px;top:249px;width:21px;height:18px;background:#fff"></div>
<div class="c" style="left:125px;top:249px;width:21px;height:18px;background:#fff"></div>
<div class="c" style="left:146px;top:249px;width:20px;height:18px;background:#fff"></div>
<div class="c" style="left:166px;top:249px;width:190px;height:18px;background:#fff"><span style="left:3px;">De Warande</span></div>
<div class="c" style="left:356px;top:249px;width:44px;height:18px;background:#ffffe1"><span style="right:2px;">7,60</span></div>
<div class="c" style="left:400px;top:249px;width:25px;height:18px;background:#fff"><span style="left:3px;">NO</span></div>
<div class="c" style="left:425px;top:249px;width:134px;height:18px;background:#fff"><span style="left:3px;">harrieklomp</span></div>
<div class="c" style="left:559px;top:249px;width:64px;height:18px;background:#fff"><span style="left:3px;">05-11-2014</span></div>
<div class="c" style="left:623px;top:249px;width:63px;height:18px;background:#fff"><span style="left:3px;">28-10-2019</span></div>
<div class="c" style="left:686px;top:249px;width:83px;height:18px;background:#fff"><span style="left:3px;">09-11-2017</span></div>
<div class="c" style="left:769px;top:249px;width:51px;height:18px;background:#fff"></div>
<div class="c" style="left:820px;top:249px;width:26px;height:18px;background:#fff"><span style="right:2px;">1,0</span></div>
<div class="c" style="left:846px;top:249px;width:27px;height:18px;background:#fff"><span style="right:2px;">2,0</span></div>
<div class="c" style="left:873px;top:249px;width:64px;height:18px;background:#fff"><span style="left:3px;">01-02-2018</span></div>
<div class="c" style="left:937px;top:249px;width:32px;height:18px;background:#fff"></div>
<div class="c" style="left:969px;top:249px;width:18px;height:18px;background:#fff"></div>
<svg class="a" style="left:66px;top:250px" width="15" height="15" viewBox="0 0 15 15"><use href="#multi"/></svg>
<svg class="a" style="left:107px;top:250px" width="15" height="15" viewBox="0 0 14 14"><use href="#chk"/></svg>
<svg class="a" style="left:127px;top:251px" width="14" height="14" viewBox="0 0 14 14"><rect x="0" y="0" width="6" height="6" fill="#008000"/><rect x="7" y="0" width="6" height="6" fill="#008000"/><rect x="0.5" y="8.5" width="5" height="5" fill="#ffff00" stroke="#000" stroke-width="1"/><rect x="7" y="7" width="6" height="6" fill="#008000"/></svg>
<svg class="a" style="left:772px;top:252px" width="42" height="11" viewBox="0 0 42 11"><rect x="0.5" y="0.5" width="41" height="10" fill="#fff" stroke="#b4b4b4" stroke-width="1"/><rect x="30" y="1" width="11" height="9" fill="#c4c4c4"/><rect x="2" y="7" width="2" height="2" fill="#dadada"/><rect x="7" y="5" width="4" height="4" fill="#dadada"/><rect x="13" y="3" width="6" height="6" fill="#a01414"/><rect x="22" y="2" width="7" height="7" fill="#dadada"/></svg>
<div class="c" style="left:0px;top:267px;width:63px;height:17px;background:#ffff00"><span style="left:2px;">OB133B</span></div>
<div class="c" style="left:63px;top:267px;width:21px;height:17px;background:#fff"></div>
<div class="c" style="left:84px;top:267px;width:20px;height:17px;background:#fff"></div>
<div class="c" style="left:104px;top:267px;width:21px;height:17px;background:#fff"></div>
<div class="c" style="left:125px;top:267px;width:21px;height:17px;background:#fff"></div>
<div class="c" style="left:146px;top:267px;width:20px;height:17px;background:#fff"></div>
<div class="c" style="left:166px;top:267px;width:190px;height:17px;background:#fff"><span style="left:3px;">Grenspaal BE/NL 185</span></div>
<div class="c" style="left:356px;top:267px;width:44px;height:17px;background:#ffffe1"><span style="right:2px;">7,82</span></div>
<div class="c" style="left:400px;top:267px;width:25px;height:17px;background:#fff"><span style="left:3px;">N</span></div>
<div class="c" style="left:425px;top:267px;width:134px;height:17px;background:#fff"><span style="left:3px;">Grenspalen BE-NL</span></div>
<div class="c" style="left:559px;top:267px;width:64px;height:17px;background:#fff"><span style="left:3px;">01-06-2011</span></div>
<div class="c" style="left:623px;top:267px;width:63px;height:17px;background:#fff"><span style="left:3px;">28-10-2019</span></div>
<div class="c" style="left:686px;top:267px;width:83px;height:17px;background:#fff"><span style="left:3px;">12-04-2015</span></div>
<div class="c" style="left:769px;top:267px;width:51px;height:17px;background:#fff"></div>
<div class="c" style="left:820px;top:267px;width:26px;height:17px;background:#fff"><span style="right:2px;">1,0</span></div>
<div class="c" style="left:846px;top:267px;width:27px;height:17px;background:#fff"><span style="right:2px;">1,0</span></div>
<div class="c" style="left:873px;top:267px;width:64px;height:17px;background:#fff"><span style="left:3px;">12-04-2015</span></div>
<div class="c" style="left:937px;top:267px;width:32px;height:17px;background:#fff"></div>
<div class="c" style="left:969px;top:267px;width:18px;height:17px;background:#fff"></div>
<svg class="a" style="left:66px;top:268px" width="15" height="15" viewBox="0 0 15 15"><use href="#ghost"/></svg>
<svg class="a" style="left:107px;top:268px" width="15" height="15" viewBox="0 0 14 14"><use href="#chk"/></svg>
<svg class="a" style="left:127px;top:269px" width="14" height="14" viewBox="0 0 14 14"><rect x="0" y="0" width="6" height="6" fill="#008000"/><rect x="7" y="0" width="6" height="6" fill="#008000"/><rect x="0" y="7" width="6" height="6" fill="#008000"/><rect x="7" y="7" width="6" height="6" fill="#008000"/></svg>
<svg class="a" style="left:772px;top:270px" width="42" height="11" viewBox="0 0 42 11"><rect x="0.5" y="0.5" width="41" height="10" fill="#fff" stroke="#b4b4b4" stroke-width="1"/><rect x="30" y="1" width="11" height="9" fill="#c4c4c4"/><rect x="2" y="7" width="2" height="2" fill="#dadada"/><rect x="7" y="5" width="4" height="4" fill="#dadada"/><rect x="13" y="3" width="6" height="6" fill="#dadada"/><rect x="22" y="2" width="7" height="7" fill="#dadada"/><rect x="31.5" y="2.5" width="7" height="6" fill="#dadada" stroke="#b02020" stroke-width="1" stroke-dasharray="1 1"/></svg>
<div class="c" style="left:0px;top:284px;width:63px;height:18px;background:#ffff00"><span style="left:2px;">OB133A</span></div>
<div class="c" style="left:63px;top:284px;width:21px;height:18px;background:#fff"></div>
<div class="c" style="left:84px;top:284px;width:20px;height:18px;background:#fff"></div>
<div class="c" style="left:104px;top:284px;width:21px;height:18px;background:#fff"></div>
<div class="c" style="left:125px;top:284px;width:21px;height:18px;background:#fff"></div>
<div class="c" style="left:146px;top:284px;width:20px;height:18px;background:#fff"></div>
<div class="c" style="left:166px;top:284px;width:190px;height:18px;background:#fff"><span style="left:3px;">Grenspaal BE/NL 184</span></div>
<div class="c" style="left:356px;top:284px;width:44px;height:18px;background:#ffffe1"><span style="right:2px;">8,63</span></div>
<div class="c" style="left:400px;top:284px;width:25px;height:18px;background:#fff"><span style="left:3px;">N</span></div>
<div class="c" style="left:425px;top:284px;width:134px;height:18px;background:#fff"><span style="left:3px;">Grenspalen BE-NL</span></div>
<div class="c" style="left:559px;top:284px;width:64px;height:18px;background:#fff"><span style="left:3px;">01-06-2011</span></div>
<div class="c" style="left:623px;top:284px;width:63px;height:18px;background:#fff"><span style="left:3px;">28-10-2019</span></div>
<div class="c" style="left:686px;top:284px;width:83px;height:18px;background:#fff"><span style="left:3px;">12-04-2015</span></div>
<div class="c" style="left:769px;top:284px;width:51px;height:18px;background:#fff"></div>
<div class="c" style="left:820px;top:284px;width:26px;height:18px;background:#fff"><span style="right:2px;">1,0</span></div>
<div class="c" style="left:846px;top:284px;width:27px;height:18px;background:#fff"><span style="right:2px;">1,0</span></div>
<div class="c" style="left:873px;top:284px;width:64px;height:18px;background:#fff"><span style="left:3px;">12-04-2015</span></div>
<div class="c" style="left:937px;top:284px;width:32px;height:18px;background:#fff"></div>
<div class="c" style="left:969px;top:284px;width:18px;height:18px;background:#fff"></div>
<svg class="a" style="left:66px;top:285px" width="15" height="15" viewBox="0 0 15 15"><use href="#ghost"/></svg>
<svg class="a" style="left:107px;top:285px" width="15" height="15" viewBox="0 0 14 14"><use href="#chk"/></svg>
<svg class="a" style="left:127px;top:286px" width="14" height="14" viewBox="0 0 14 14"><rect x="0" y="0" width="6" height="6" fill="#008000"/><rect x="7" y="0" width="6" height="6" fill="#008000"/><rect x="0" y="7" width="6" height="6" fill="#008000"/><rect x="7" y="7" width="6" height="6" fill="#008000"/></svg>
<svg class="a" style="left:772px;top:287px" width="42" height="11" viewBox="0 0 42 11"><rect x="0.5" y="0.5" width="41" height="10" fill="#fff" stroke="#b4b4b4" stroke-width="1"/><rect x="30" y="1" width="11" height="9" fill="#c4c4c4"/><rect x="2" y="7" width="2" height="2" fill="#dadada"/><rect x="7" y="5" width="4" height="4" fill="#dadada"/><rect x="13" y="3" width="6" height="6" fill="#dadada"/><rect x="22" y="2" width="7" height="7" fill="#dadada"/><rect x="31.5" y="2.5" width="7" height="6" fill="#dadada" stroke="#b02020" stroke-width="1" stroke-dasharray="1 1"/></svg>
<div class="c" style="left:0px;top:302px;width:63px;height:18px;background:#ffff00"><span style="left:2px;">OB133C</span></div>
<div class="c" style="left:63px;top:302px;width:21px;height:18px;background:#fff"></div>
<div class="c" style="left:84px;top:302px;width:20px;height:18px;background:#fff"></div>
<div class="c" style="left:104px;top:302px;width:21px;height:18px;background:#fff"></div>
<div class="c" style="left:125px;top:302px;width:21px;height:18px;background:#fff"></div>
<div class="c" style="left:146px;top:302px;width:20px;height:18px;background:#fff"></div>
<div class="c" style="left:166px;top:302px;width:190px;height:18px;background:#fff"><span style="left:3px;">Grenspaal BE/NL 186</span></div>
<div class="c" style="left:356px;top:302px;width:44px;height:18px;background:#ffffe1"><span style="right:2px;">8,76</span></div>
<div class="c" style="left:400px;top:302px;width:25px;height:18px;background:#fff"><span style="left:3px;">N</span></div>
<div class="c" style="left:425px;top:302px;width:134px;height:18px;background:#fff"><span style="left:3px;">Grenspalen BE-NL</span></div>
<div class="c" style="left:559px;top:302px;width:64px;height:18px;background:#fff"><span style="left:3px;">01-06-2011</span></div>
<div class="c" style="left:623px;top:302px;width:63px;height:18px;background:#fff"><span style="left:3px;">28-10-2019</span></div>
<div class="c" style="left:686px;top:302px;width:83px;height:18px;background:#fff"><span style="left:3px;">06-01-2017</span></div>
<div class="c" style="left:769px;top:302px;width:51px;height:18px;background:#fff"></div>
<div class="c" style="left:820px;top:302px;width:26px;height:18px;background:#fff"><span style="right:2px;">1,0</span></div>
<div class="c" style="left:846px;top:302px;width:27px;height:18px;background:#fff"><span style="right:2px;">1,0</span></div>
<div class="c" style="left:873px;top:302px;width:64px;height:18px;background:#fff"><span style="left:3px;">06-01-2017</span></div>
<div class="c" style="left:937px;top:302px;width:32px;height:18px;background:#fff"></div>
<div class="c" style="left:969px;top:302px;width:18px;height:18px;background:#fff"></div>
<svg class="a" style="left:66px;top:303px" width="15" height="15" viewBox="0 0 15 15"><use href="#ghost"/></svg>
<svg class="a" style="left:107px;top:303px" width="15" height="15" viewBox="0 0 14 14"><use href="#chk"/></svg>
<svg class="a" style="left:127px;top:304px" width="14" height="14" viewBox="0 0 14 14"><rect x="0" y="0" width="6" height="6" fill="#008000"/><rect x="7" y="0" width="6" height="6" fill="#008000"/><rect x="0" y="7" width="6" height="6" fill="#008000"/><rect x="7" y="7" width="6" height="6" fill="#008000"/></svg>
<svg class="a" style="left:772px;top:305px" width="42" height="11" viewBox="0 0 42 11"><rect x="0.5" y="0.5" width="41" height="10" fill="#fff" stroke="#b4b4b4" stroke-width="1"/><rect x="30" y="1" width="11" height="9" fill="#c4c4c4"/><rect x="2" y="7" width="2" height="2" fill="#dadada"/><rect x="7" y="5" width="4" height="4" fill="#dadada"/><rect x="13" y="3" width="6" height="6" fill="#dadada"/><rect x="22" y="2" width="7" height="7" fill="#dadada"/><rect x="31.5" y="2.5" width="7" height="6" fill="#dadada" stroke="#b02020" stroke-width="1" stroke-dasharray="1 1"/></svg>
<div class="c" style="left:0px;top:320px;width:63px;height:18px;background:#ffff00"><span style="left:2px;">OB1324</span></div>
<div class="c" style="left:63px;top:320px;width:21px;height:18px;background:#fff"></div>
<div class="c" style="left:84px;top:320px;width:20px;height:18px;background:#fff"></div>
<div class="c" style="left:104px;top:320px;width:21px;height:18px;background:#fff"></div>
<div class="c" style="left:125px;top:320px;width:21px;height:18px;background:#fff"></div>
<div class="c" style="left:146px;top:320px;width:20px;height:18px;background:#fff"></div>
<div class="c" style="left:166px;top:320px;width:190px;height:18px;background:#fff"><span style="left:3px;">Grenspaal BE/NL 169</span></div>
<div class="c" style="left:356px;top:320px;width:44px;height:18px;background:#ffffe1"><span style="right:2px;">8,84</span></div>
<div class="c" style="left:400px;top:320px;width:25px;height:18px;background:#fff"><span style="left:3px;">O</span></div>
<div class="c" style="left:425px;top:320px;width:134px;height:18px;background:#fff"><span style="left:3px;">Grenspalen BE-NL</span></div>
<div class="c" style="left:559px;top:320px;width:64px;height:18px;background:#fff"><span style="left:3px;">01-06-2011</span></div>
<div class="c" style="left:623px;top:320px;width:63px;height:18px;background:#fff"><span style="left:3px;">28-10-2019</span></div>
<div class="c" style="left:686px;top:320px;width:83px;height:18px;background:#fff"><span style="left:3px;">20-06-2017</span></div>
<div class="c" style="left:769px;top:320px;width:51px;height:18px;background:#fff"></div>
<div class="c" style="left:820px;top:320px;width:26px;height:18px;background:#fff"><span style="right:2px;">1,0</span></div>
<div class="c" style="left:846px;top:320px;width:27px;height:18px;background:#fff"><span style="right:2px;">1,0</span></div>
<div class="c" style="left:873px;top:320px;width:64px;height:18px;background:#fff"><span style="left:3px;">20-06-2017</span></div>
<div class="c" style="left:937px;top:320px;width:32px;height:18px;background:#fff"></div>
<div class="c" style="left:969px;top:320px;width:18px;height:18px;background:#fff"></div>
<svg class="a" style="left:66px;top:321px" width="15" height="15" viewBox="0 0 15 15"><use href="#ghost"/></svg>
<svg class="a" style="left:107px;top:321px" width="15" height="15" viewBox="0 0 14 14"><use href="#chk"/></svg>
<svg class="a" style="left:127px;top:322px" width="14" height="14" viewBox="0 0 14 14"><rect x="0" y="0" width="6" height="6" fill="#008000"/><rect x="7" y="0" width="6" height="6" fill="#008000"/><rect x="0" y="7" width="6" height="6" fill="#008000"/><rect x="7" y="7" width="6" height="6" fill="#008000"/></svg>
<svg class="a" style="left:772px;top:323px" width="42" height="11" viewBox="0 0 42 11"><rect x="0.5" y="0.5" width="41" height="10" fill="#fff" stroke="#b4b4b4" stroke-width="1"/><rect x="30" y="1" width="11" height="9" fill="#c4c4c4"/><rect x="2" y="7" width="2" height="2" fill="#dadada"/><rect x="7" y="5" width="4" height="4" fill="#dadada"/><rect x="13" y="3" width="6" height="6" fill="#dadada"/><rect x="22" y="2" width="7" height="7" fill="#dadada"/><rect x="31.5" y="2.5" width="7" height="6" fill="#dadada" stroke="#b02020" stroke-width="1" stroke-dasharray="1 1"/></svg>
<div class="c" style="left:0px;top:338px;width:63px;height:18px;background:#ffff00"><span style="left:2px;">OB1325</span></div>
<div class="c" style="left:63px;top:338px;width:21px;height:18px;background:#fff"></div>
<div class="c" style="left:84px;top:338px;width:20px;height:18px;background:#fff"></div>
<div class="c" style="left:104px;top:338px;width:21px;height:18px;background:#fff"></div>
<div class="c" style="left:125px;top:338px;width:21px;height:18px;background:#fff"></div>
<div class="c" style="left:146px;top:338px;width:20px;height:18px;background:#fff"></div>
<div class="c" style="left:166px;top:338px;width:190px;height:18px;background:#fff"><span style="left:3px;">Grenspaal BE/NL 170</span></div>
<div class="c" style="left:356px;top:338px;width:44px;height:18px;background:#ffffe1"><span style="right:2px;">8,85</span></div>
<div class="c" style="left:400px;top:338px;width:25px;height:18px;background:#fff"><span style="left:3px;">O</span></div>
<div class="c" style="left:425px;top:338px;width:134px;height:18px;background:#fff"><span style="left:3px;">Grenspalen BE-NL</span></div>
<div class="c" style="left:559px;top:338px;width:64px;height:18px;background:#fff"><span style="left:3px;">01-06-2011</span></div>
<div class="c" style="left:623px;top:338px;width:63px;height:18px;background:#fff"><span style="left:3px;">28-10-2019</span></div>
<div class="c" style="left:686px;top:338px;width:83px;height:18px;background:#fff"><span style="left:3px;">05-04-2015</span></div>
<div class="c" style="left:769px;top:338px;width:51px;height:18px;background:#fff"></div>
<div class="c" style="left:820px;top:338px;width:26px;height:18px;background:#fff"><span style="right:2px;">1,0</span></div>
<div class="c" style="left:846px;top:338px;width:27px;height:18px;background:#fff"><span style="right:2px;">1,0</span></div>
<div class="c" style="left:873px;top:338px;width:64px;height:18px;background:#fff"><span style="left:3px;">05-04-2015</span></div>
<div class="c" style="left:937px;top:338px;width:32px;height:18px;background:#fff"></div>
<div class="c" style="left:969px;top:338px;width:18px;height:18px;background:#fff"></div>
<svg class="a" style="left:66px;top:339px" width="15" height="15" viewBox="0 0 15 15"><use href="#ghost"/></svg>
<svg class="a" style="left:107px;top:339px" width="15" height="15" viewBox="0 0 14 14"><use href="#chk"/></svg>
<svg class="a" style="left:127px;top:340px" width="14" height="14" viewBox="0 0 14 14"><rect x="0" y="0" width="6" height="6" fill="#008000"/><rect x="7" y="0" width="6" height="6" fill="#008000"/><rect x="0" y="7" width="6" height="6" fill="#008000"/><rect x="7" y="7" width="6" height="6" fill="#008000"/></svg>
<svg class="a" style="left:772px;top:341px" width="42" height="11" viewBox="0 0 42 11"><rect x="0.5" y="0.5" width="41" height="10" fill="#fff" stroke="#b4b4b4" stroke-width="1"/><rect x="30" y="1" width="11" height="9" fill="#c4c4c4"/><rect x="2" y="7" width="2" height="2" fill="#dadada"/><rect x="7" y="5" width="4" height="4" fill="#dadada"/><rect x="13" y="3" width="6" height="6" fill="#dadada"/><rect x="22" y="2" width="7" height="7" fill="#dadada"/><rect x="31.5" y="2.5" width="7" height="6" fill="#dadada" stroke="#b02020" stroke-width="1" stroke-dasharray="1 1"/></svg>
<div class="c" style="left:0px;top:356px;width:63px;height:18px;background:#ffff00"><span style="left:2px;">OB1B03</span></div>
<div class="c" style="left:63px;top:356px;width:21px;height:18px;background:#fff"></div>
<div class="c" style="left:84px;top:356px;width:20px;height:18px;background:#fff"></div>
<div class="c" style="left:104px;top:356px;width:21px;height:18px;background:#fff"></div>
<div class="c" style="left:125px;top:356px;width:21px;height:18px;background:#fff"></div>
<div class="c" style="left:146px;top:356px;width:20px;height:18px;background:#fff"></div>
<div class="c" style="left:166px;top:356px;width:190px;height:18px;background:#fff"><span style="left:3px;">GeoWolf 9: De Plateaux</span></div>
<div class="c" style="left:356px;top:356px;width:44px;height:18px;background:#ffffe1"><span style="right:2px;">8,99</span></div>
<div class="c" style="left:400px;top:356px;width:25px;height:18px;background:#fff"><span style="left:3px;">N</span></div>
<div class="c" style="left:425px;top:356px;width:134px;height:18px;background:#fff"><span style="left:3px;">hellsinki</span></div>
<div class="c" style="left:559px;top:356px;width:64px;height:18px;background:#fff"><span style="left:3px;">01-01-2003</span></div>
<div class="c" style="left:623px;top:356px;width:63px;height:18px;background:#fff"><span style="left:3px;">28-10-2019</span></div>
<div class="c" style="left:686px;top:356px;width:83px;height:18px;background:#fff"><span style="left:3px;">08-09-2015</span></div>
<div class="c" style="left:769px;top:356px;width:51px;height:18px;background:#fff"></div>
<div class="c" style="left:820px;top:356px;width:26px;height:18px;background:#fff"><span style="right:2px;">1,0</span></div>
<div class="c" style="left:846px;top:356px;width:27px;height:18px;background:#fff"><span style="right:2px;">1,0</span></div>
<div class="c" style="left:873px;top:356px;width:64px;height:18px;background:#fff"><span style="left:3px;">12-10-2017</span></div>
<div class="c" style="left:937px;top:356px;width:32px;height:18px;background:#fff"></div>
<div class="c" style="left:969px;top:356px;width:18px;height:18px;background:#fff"></div>
<svg class="a" style="left:66px;top:357px" width="15" height="15" viewBox="0 0 15 15"><use href="#multi"/></svg>
<svg class="a" style="left:107px;top:357px" width="15" height="15" viewBox="0 0 14 14"><use href="#chk"/></svg>
<svg class="a" style="left:127px;top:358px" width="14" height="14" viewBox="0 0 14 14"><rect x="0" y="0" width="6" height="6" fill="#008000"/><rect x="7" y="0" width="6" height="6" fill="#008000"/><rect x="0" y="7" width="6" height="6" fill="#008000"/><rect x="7" y="7" width="6" height="6" fill="#008000"/></svg>
<svg class="a" style="left:772px;top:359px" width="42" height="11" viewBox="0 0 42 11"><rect x="0.5" y="0.5" width="41" height="10" fill="#fff" stroke="#b4b4b4" stroke-width="1"/><rect x="30" y="1" width="11" height="9" fill="#c4c4c4"/><rect x="2" y="7" width="2" height="2" fill="#dadada"/><rect x="7" y="5" width="4" height="4" fill="#dadada"/><rect x="13" y="3" width="6" height="6" fill="#a01414"/><rect x="22" y="2" width="7" height="7" fill="#dadada"/></svg>
<div class="c" style="left:0px;top:374px;width:63px;height:18px;background:#00ff00"><span style="left:2px;">OB1A98</span></div>
<div class="c" style="left:63px;top:374px;width:21px;height:18px;background:#fff"></div>
<div class="c" style="left:84px;top:374px;width:20px;height:18px;background:#fff"></div>
<div class="c" style="left:104px;top:374px;width:21px;height:18px;background:#fff"></div>
<div class="c" style="left:125px;top:374px;width:21px;height:18px;background:#fff"></div>
<div class="c" style="left:146px;top:374px;width:20px;height:18px;background:#fff"></div>
<div class="c" style="left:166px;top:374px;width:190px;height:18px;background:#fff"><span style="left:3px;">Van hot naar her</span></div>
<div class="c" style="left:356px;top:374px;width:44px;height:18px;background:#ffffe1"><span style="right:2px;">9,14</span></div>
<div class="c" style="left:400px;top:374px;width:25px;height:18px;background:#fff"><span style="left:3px;">W</span></div>
<div class="c" style="left:425px;top:374px;width:134px;height:18px;background:#fff"><span style="left:3px;">harrieklomp</span></div>
<div class="c" style="left:559px;top:374px;width:64px;height:18px;background:#fff"><span style="left:3px;">01-01-2016</span></div>
<div class="c" style="left:623px;top:374px;width:63px;height:18px;background:#fff"><span style="left:3px;">28-10-2019</span></div>
<div class="c" style="left:686px;top:374px;width:83px;height:18px;background:#fff"><span style="left:3px;">05-12-2016</span></div>
<div class="c" style="left:769px;top:374px;width:51px;height:18px;background:#fff"></div>
<div class="c" style="left:820px;top:374px;width:26px;height:18px;background:#fff"><span style="right:2px;">1,5</span></div>
<div class="c" style="left:846px;top:374px;width:27px;height:18px;background:#fff"><span style="right:2px;">2,0</span></div>
<div class="c" style="left:873px;top:374px;width:64px;height:18px;background:#fff"><span style="left:3px;">01-08-2018</span></div>
<div class="c" style="left:937px;top:374px;width:32px;height:18px;background:#fff"></div>
<div class="c" style="left:969px;top:374px;width:18px;height:18px;background:#fff"></div>
<svg class="a" style="left:67px;top:375px" width="12" height="16" viewBox="0 0 12 16"><use href="#q"/></svg>
<svg class="a" style="left:107px;top:375px" width="15" height="15" viewBox="0 0 14 14"><use href="#chk"/></svg>
<svg class="a" style="left:127px;top:376px" width="14" height="14" viewBox="0 0 14 14"><rect x="0" y="0" width="6" height="6" fill="#008000"/><rect x="7.5" y="0.5" width="5" height="5" fill="#ffff00" stroke="#000" stroke-width="1"/><rect x="0" y="7" width="6" height="6" fill="#008000"/><rect x="7" y="7" width="6" height="6" fill="#ff0000"/></svg>
<svg class="a" style="left:772px;top:377px" width="42" height="11" viewBox="0 0 42 11"><rect x="0.5" y="0.5" width="41" height="10" fill="#fff" stroke="#b4b4b4" stroke-width="1"/><rect x="30" y="1" width="11" height="9" fill="#c4c4c4"/><rect x="2" y="7" width="2" height="2" fill="#dadada"/><rect x="7" y="5" width="4" height="4" fill="#dadada"/><rect x="13" y="3" width="6" height="6" fill="#a01414"/><rect x="22" y="2" width="7" height="7" fill="#dadada"/></svg>
<div class="a" style="left:62px;top:141px;width:22px;height:18px;border:1px dotted #000"></div>
<div class="a" style="left:986px;top:122px;width:14px;height:271px;background:#e9e7e3"></div>
<div class="a" style="left:986px;top:122px;width:14px;height:16px;background:#d4d0c8;border-top:1px solid #fff;border-left:1px solid #fff;border-right:1px solid #404040;border-bottom:1px solid #404040;box-shadow:inset -1px -1px 0 #808080"></div>
<svg class="a" style="left:989px;top:127px" width="7" height="4" viewBox="0 0 7 4"><path d="M0 4 L3.5 0 L7 4 Z" fill="#000"/></svg>
<div class="a" style="left:986px;top:139px;width:14px;height:6px;background:#d4d0c8;border-top:1px solid #fff;border-left:1px solid #fff;border-right:1px solid #404040;border-bottom:1px solid #404040;box-shadow:inset -1px -1px 0 #808080"></div>
<div class="a" style="left:986px;top:377px;width:14px;height:15px;background:#d4d0c8;border-top:1px solid #fff;border-left:1px solid #fff;border-right:1px solid #404040;border-bottom:1px solid #404040;box-shadow:inset -1px -1px 0 #808080"></div>
<svg class="a" style="left:989px;top:382px" width="7" height="4" viewBox="0 0 7 4"><path d="M0 0 L3.5 4 L7 0 Z" fill="#000"/></svg>
<div class="a" style="left:0;top:392px;width:1000px;height:14px;background:#e9e7e3"></div>
<div class="a" style="left:986px;top:392px;width:14px;height:14px;background:#d4d0c8"></div>
<div class="a" style="left:0px;top:392px;width:13px;height:14px;background:#d4d0c8;border-top:1px solid #fff;border-left:1px solid #fff;border-right:1px solid #404040;border-bottom:1px solid #404040;box-shadow:inset -1px -1px 0 #808080"></div>
<svg class="a" style="left:3px;top:395px" width="4" height="7" viewBox="0 0 4 7"><path d="M4 0 L0 3.5 L4 7 Z" fill="#000"/></svg>
<div class="a" style="left:13px;top:392px;width:727px;height:14px;background:#d4d0c8;border-top:1px solid #d4d0c8;border-left:1px solid #d4d0c8;border-right:1px solid #404040;border-bottom:1px solid #404040;box-shadow:inset 1px 1px 0 #fff,inset -1px -1px 0 #808080"></div>
<div class="a" style="left:973px;top:392px;width:13px;height:14px;background:#d4d0c8;border-top:1px solid #fff;border-left:1px solid #fff;border-right:1px solid #404040;border-bottom:1px solid #404040;box-shadow:inset -1px -1px 0 #808080"></div>
<svg class="a" style="left:977px;top:395px" width="4" height="7" viewBox="0 0 4 7"><path d="M0 0 L4 3.5 L0 7 Z" fill="#000"/></svg>
<div class="a" style="left:0;top:406px;width:1000px;height:1px;background:#8ea6c0"></div>
<div class="a" style="left:1px;top:410px;width:218px;height:20px;border-top:1px solid #8e8b86;border-left:1px solid #8e8b86;border-bottom:1px solid #fff;border-right:1px solid #fff;font-size:11px;color:#1a1a1a;white-space:nowrap;overflow:hidden;line-height:1"><span class="t" style="left:5px;top:4px">Filter: Geen</span></div>
<div class="a" style="left:221px;top:410px;width:236px;height:20px;border-top:1px solid #8e8b86;border-left:1px solid #8e8b86;border-bottom:1px solid #fff;border-right:1px solid #fff;font-size:11px;color:#1a1a1a;white-space:nowrap;overflow:hidden;line-height:1"><span class="t" style="left:5px;top:4px">4470 Getoond (alle waypoints)</span></div>
<svg class="a" style="left:387px;top:414px" width="8" height="13" viewBox="0 0 8 13"><circle cx="4" cy="2" r="1.8" fill="#000"/><path d="M1 4 L7 4 L8 8 L6.5 8 L6.5 12.5 L1.5 12.5 L1.5 8 L0 8 Z" fill="#000"/></svg>
<span class="t" style="left:399px;top:414px;font-size:11px;color:#1a1a1a">= 0</span>
<div class="a" style="left:459px;top:410px;width:219px;height:20px;border-top:1px solid #8e8b86;border-left:1px solid #8e8b86;border-bottom:1px solid #fff;border-right:1px solid #fff;font-size:11px;color:#1a1a1a;white-space:nowrap;overflow:hidden;line-height:1"><span class="t" style="left:5px;top:4px">Centrum = Temp</span></div>
<div class="a" style="left:680px;top:410px;width:320px;height:20px;border-top:1px solid #8e8b86;border-left:1px solid #8e8b86;border-bottom:1px solid #fff;border-right:1px solid #fff;font-size:11px;color:#1a1a1a;white-space:nowrap;overflow:hidden;line-height:1"></div>
<span class="t" style="left:686px;top:415px;font-size:11.5px;color:#1a1a1a">Aantal:</span>
<div class="a" style="left:726px;top:413px;width:25px;height:16px;background:#ffff00"></div><span class="t" style="left:729px;top:415px;font-size:11.5px">178</span>
<div class="a" style="left:755px;top:413px;width:31px;height:16px;background:#fff"></div><span class="t" style="left:757px;top:415px;font-size:11.5px">4280</span>
<div class="a" style="left:791px;top:413px;width:25px;height:16px;background:#f08080"></div><span class="t" style="left:794px;top:415px;font-size:11.5px">166</span>
<div class="a" style="left:820px;top:413px;width:24px;height:16px;background:#00ff00"></div><span class="t" style="left:825px;top:415px;font-size:11.5px">16</span>
<div class="a" style="left:0;top:430px;width:1000px;height:2px;background:#c4c1bb"></div>
<div class="a" style="left:0;top:432px;width:1000px;height:1px;background:#f4f3f1"></div>
<div class="a" style="left:0;top:433px;width:1000px;height:2px;background:#a9a6a0"></div>
<div class="a" style="left:0;top:436px;width:1000px;height:1px;background:#fff"></div>
<div class="a" style="left:0;top:437px;width:1000px;height:2px;background:#4a4844"></div>
<div class="a" style="left:0;top:439px;width:986px;height:307px;background:#006633"></div>
<div class="a" style="left:9px;top:453px;width:967px;height:293px;background:#fff"></div>
<div class="a" style="left:11px;top:455px;width:964px;height:291px;background:#9a0000"></div>
<div class="a" style="left:13px;top:457px;width:498px;height:289px;background:#f6f6f6"></div>
<div class="a" style="left:513px;top:457px;width:460px;height:289px;background:#ffffd0"></div>
<div class="a" style="left:986px;top:438px;width:14px;height:308px;background:#e9e7e3"></div>
<div class="a" style="left:986px;top:438px;width:14px;height:15px;background:#d4d0c8;border-top:1px solid #fff;border-left:1px solid #fff;border-right:1px solid #404040;border-bottom:1px solid #404040;box-shadow:inset -1px -1px 0 #808080"></div>
<svg class="a" style="left:989px;top:442px" width="7" height="4" viewBox="0 0 7 4"><path d="M0 4 L3.5 0 L7 4 Z" fill="#000"/></svg>
<div class="a" style="left:986px;top:454px;width:14px;height:21px;background:#d4d0c8;border-top:1px solid #fff;border-left:1px solid #fff;border-right:1px solid #404040;border-bottom:1px solid #404040;box-shadow:inset -1px -1px 0 #808080"></div>
<div class="a" style="left:986px;top:733px;width:14px;height:14px;background:#d4d0c8;border-top:1px solid #fff;border-left:1px solid #fff;border-right:1px solid #404040;border-bottom:1px solid #404040;box-shadow:inset -1px -1px 0 #808080"></div>
<svg class="a" style="left:989px;top:738px" width="7" height="4" viewBox="0 0 7 4"><path d="M0 0 L3.5 4 L7 0 Z" fill="#000"/></svg>
<div class="a" style="left:522px;top:466px;width:105px;height:20px;background:#d4d0c8;border-top:1px solid #fff;border-left:1px solid #fff;border-right:1px solid #404040;border-bottom:1px solid #404040;box-shadow:inset -1px -1px 0 #808080;font-size:11.5px;font-weight:bold;color:#111;text-align:center;line-height:19px;white-space:nowrap">Kaart laten zien</div>
<div class="a" style="left:641px;top:466px;width:110px;height:20px;background:#d4d0c8;border-top:1px solid #fff;border-left:1px solid #fff;border-right:1px solid #404040;border-bottom:1px solid #404040;box-shadow:inset -1px -1px 0 #808080;font-size:11.5px;font-weight:bold;color:#111;text-align:center;line-height:19px;white-space:nowrap">Gedeeld scherm</div>
<div class="a" style="left:766px;top:466px;width:66px;height:20px;background:#d4d0c8;border-top:1px solid #fff;border-left:1px solid #fff;border-right:1px solid #404040;border-bottom:1px solid #404040;box-shadow:inset -1px -1px 0 #808080;font-size:11.5px;font-weight:bold;color:#111;text-align:center;line-height:19px;white-space:nowrap">Browser</div>
<div class="a" style="left:847px;top:466px;width:83px;height:20px;background:#d4d0c8;border-top:1px solid #fff;border-left:1px solid #fff;border-right:1px solid #404040;border-bottom:1px solid #404040;box-shadow:inset -1px -1px 0 #808080;font-size:11.5px;font-weight:bold;color:#111;text-align:center;line-height:19px;white-space:nowrap">Vernieuwen</div>
<div class="a" style="left:522px;top:490px;width:439px;height:256px;border:1px solid #222;border-right:2px solid #7a7a6a;border-bottom:1px solid #111"></div>
<div id="L1a" class="t" style="left:126.00px;top:474.69px;font-size:11px;color:#454545;transform-origin:0 0;transform:scaleX(1.1860);line-height:11px;"><span style="color:#2a2ae0;text-decoration:underline;font-weight:bold">OB1A23</span></div>
<svg class="a" style="left:186px;top:469px" width="19" height="25" viewBox="0 0 12 16"><use href="#q"/></svg>
<div id="L1b" class="t" style="left:216.00px;top:469.61px;font-size:17px;color:#454545;transform-origin:0 0;transform:scaleX(1.1742);line-height:17px;"><b>Waar is hij nu dan?</b></div>
<div id="L2a" class="t" style="left:40.00px;top:497.69px;font-size:11px;color:#454545;transform-origin:0 0;transform:scaleX(1.1901);line-height:11px;">Type: <b>Mystery</b> | Grootte: <b>Normaal</b></div>
<div id="L2b" class="t" style="left:290.60px;top:497.69px;font-size:11px;color:#454545;transform-origin:0 0;transform:scaleX(1.1576);line-height:11px;">| Moeilijkheid:</div>
<div id="L2c" class="t" style="left:433.50px;top:497.69px;font-size:11px;color:#454545;transform-origin:0 0;transform:scaleX(1.2024);line-height:11px;">| Terrein:</div>
<div id="L4" class="t" style="left:57.50px;top:523.69px;font-size:11px;color:#454545;transform-origin:0 0;transform:scaleX(1.2327);line-height:11px;">van: <b style="color:#2a2ae0;text-decoration:underline">harrieklomp</b> <b style="color:#2a2ae0;text-decoration:underline">@</b> | Hide Date: <b>21-07-2013</b> | Status: <b style="color:#1e7a1e">Beschikbaar</b></div>
<div id="L5" class="t" style="left:129.50px;top:537.69px;font-size:11px;color:#454545;transform-origin:0 0;transform:scaleX(1.1892);line-height:11px;">Land: <b>Belgie</b> | Provincie: <b>Prov. Limburg (BE)</b></div>
<div id="L6" class="t" style="left:45.75px;top:550.69px;font-size:11px;color:#454545;transform-origin:0 0;transform:scaleX(1.2676);line-height:11px;">Co&ouml;rdinaten: <b>N51&deg; 11.624 E5&deg; 26.542</b> | Laatst ge&uuml;pdate: <b>28-10-2019</b> |</div>
<div id="L7" class="t" style="left:210.00px;top:563.69px;font-size:11px;color:#454545;transform-origin:0 0;transform:scaleX(1.1511);line-height:11px;">Favoriet Punten: <b>0</b></div>
<div class="a" style="left:22px;top:581px;width:479px;height:2px;background:#777"></div>
<div id="L9" class="t" style="left:22.50px;top:590.69px;font-size:11px;color:#454545;transform-origin:0 0;transform:scaleX(1.1796);line-height:11px;">Vind mij via het internet of onderweg.</div>
<div class="a" style="left:22px;top:607px;width:479px;height:2px;background:#888"></div>
<div id="L11" class="t" style="left:22.80px;top:621.69px;font-size:11px;color:#454545;transform-origin:0 0;transform:scaleX(1.1571);line-height:11px;"><span style="color:#2a2ae0;text-decoration:underline">Waar is hij nu dan?</span> hidden by <span style="color:#2a2ae0;text-decoration:underline">harrieklomp</span></div>
<div id="L12" class="t" style="left:22.80px;top:646.69px;font-size:11px;color:#454545;transform-origin:0 0;transform:scaleX(1.1840);line-height:11px;">Attributes:</div>
<div class="a" style="left:50px;top:675.0px;width:5px;height:5px;border-radius:50%;background:#444"></div>
<div id="LB0" class="t" style="left:60.50px;top:671.69px;font-size:11px;color:#454545;transform-origin:0 0;transform:scaleX(1.1278);line-height:11px;">Listed at Opencaching only</div>
<div class="a" style="left:50px;top:688.3px;width:5px;height:5px;border-radius:50%;background:#444"></div>
<div id="LB1" class="t" style="left:60.50px;top:684.99px;font-size:11px;color:#454545;transform-origin:0 0;transform:scaleX(1.1293);line-height:11px;">Parking area nearby</div>
<div class="a" style="left:50px;top:701.6px;width:5px;height:5px;border-radius:50%;background:#444"></div>
<div id="LB2" class="t" style="left:60.50px;top:698.29px;font-size:11px;color:#454545;transform-origin:0 0;transform:scaleX(1.1523);line-height:11px;">Not available 24/7</div>
<div class="a" style="left:50px;top:714.9px;width:5px;height:5px;border-radius:50%;background:#444"></div>
<div id="LB3" class="t" style="left:60.50px;top:711.59px;font-size:11px;color:#454545;transform-origin:0 0;transform:scaleX(1.1446);line-height:11px;">Bring your children</div>
<div id="L14" class="t" style="left:22.50px;top:735.69px;font-size:11px;color:#454545;transform-origin:0 0;transform:scaleX(1.1440);line-height:11px;">Om de zoveel tijd kan het gebeuren dat deze &#8220;eigen cache&#8221; op pad gaat. Soms een</div>
<svg class="a" style="left:244px;top:499px" width="42" height="11" viewBox="0 0 42 11"><rect x="0.5" y="0.5" width="41" height="10" fill="#fff" stroke="#b4b4b4"/><rect x="30" y="1" width="11" height="9" fill="#c4c4c4"/><rect x="2" y="7" width="2" height="2" fill="#dadada"/><rect x="7" y="5" width="4" height="4" fill="#dadada"/><rect x="13" y="3" width="6" height="6" fill="#a01414"/><rect x="22" y="2" width="7" height="7" fill="#dadada"/></svg>
<svg class="a" style="left:372px;top:498px" width="57" height="13" viewBox="0 0 57 13"><polygon points="6.00,0.50 7.53,4.40 11.71,4.65 8.47,7.30 9.53,11.35 6.00,9.10 2.47,11.35 3.53,7.30 0.29,4.65 4.47,4.40" fill="#e8702a" stroke="#b04a10" stroke-width="0.6"/><polygon points="17.00,0.50 18.53,4.40 22.71,4.65 19.47,7.30 20.53,11.35 17.00,9.10 13.47,11.35 14.53,7.30 11.29,4.65 15.47,4.40" fill="#e8702a" stroke="#b04a10" stroke-width="0.6"/><polygon points="28.00,0.50 29.53,4.40 33.71,4.65 30.47,7.30 31.53,11.35 28.00,9.10 24.47,11.35 25.53,7.30 22.29,4.65 26.47,4.40" fill="#e8702a" stroke="#b04a10" stroke-width="0.6"/><polygon points="39.00,0.50 40.53,4.40 44.71,4.65 41.47,7.30 42.53,11.35 39.00,9.10 35.47,11.35 36.53,7.30 33.29,4.65 37.47,4.40" fill="#e8702a" stroke="#b04a10" stroke-width="0.6"/><polygon points="50.00,0.50 51.53,4.40 55.71,4.65 52.47,7.30 53.53,11.35 50.00,9.10 46.47,11.35 47.53,7.30 44.29,4.65 48.47,4.40" fill="#fff" stroke="#bbb" stroke-width="0.6"/><clipPath id="hc372_498"><rect x="44" y="0" width="6" height="13"/></clipPath><polygon points="50.00,0.50 51.53,4.40 55.71,4.65 52.47,7.30 53.53,11.35 50.00,9.10 46.47,11.35 47.53,7.30 44.29,4.65 48.47,4.40" fill="#e8702a" stroke="#b04a10" stroke-width="0.6" clip-path="url(#hc372_498)"/></svg>
<svg class="a" style="left:233px;top:510px" width="57" height="13" viewBox="0 0 57 13"><polygon points="6.00,0.50 7.53,4.40 11.71,4.65 8.47,7.30 9.53,11.35 6.00,9.10 2.47,11.35 3.53,7.30 0.29,4.65 4.47,4.40" fill="#e8702a" stroke="#b04a10" stroke-width="0.6"/><polygon points="17.00,0.50 18.53,4.40 22.71,4.65 19.47,7.30 20.53,11.35 17.00,9.10 13.47,11.35 14.53,7.30 11.29,4.65 15.47,4.40" fill="#e8702a" stroke="#b04a10" stroke-width="0.6"/><polygon points="28.00,0.50 29.53,4.40 33.71,4.65 30.47,7.30 31.53,11.35 28.00,9.10 24.47,11.35 25.53,7.30 22.29,4.65 26.47,4.40" fill="#e8702a" stroke="#b04a10" stroke-width="0.6"/><polygon points="39.00,0.50 40.53,4.40 44.71,4.65 41.47,7.30 42.53,11.35 39.00,9.10 35.47,11.35 36.53,7.30 33.29,4.65 37.47,4.40" fill="#e8702a" stroke="#b04a10" stroke-width="0.6"/><polygon points="50.00,0.50 51.53,4.40 55.71,4.65 52.47,7.30 53.53,11.35 50.00,9.10 46.47,11.35 47.53,7.30 44.29,4.65 48.47,4.40" fill="#fff" stroke="#bbb" stroke-width="0.7"/></svg>
</body></html>
